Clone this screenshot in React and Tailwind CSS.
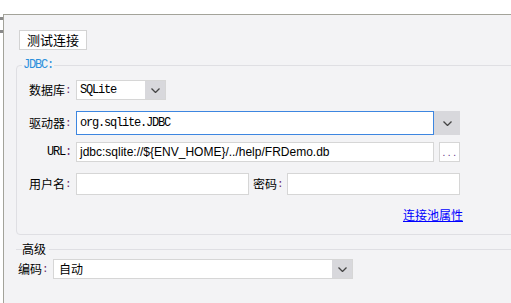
import React from 'react';

const cjk = "font-['Noto_Sans_CJK_SC',sans-serif]";

function Chevron() {
  return (
    <svg width="9" height="5" viewBox="0 0 9 5">
      <path d="M0.5 0.5 L4.5 4.5 L8.5 0.5" stroke="#444" strokeWidth="1.3" fill="none" />
    </svg>
  );
}

function Colon() {
  return <span className="font-['Liberation_Mono',monospace] text-[11px] tracking-[-0.6px] text-[#6b2d6b]">:</span>;
}

function Label({ text }) {
  return (
    <span className={`${cjk} flex w-[54px] shrink-0 items-center justify-end text-[12px] leading-none text-black`}>
      {text}
      <Colon />
    </span>
  );
}

function App() {
  return (
    <div className="flex h-[303px] w-[511px] flex-col overflow-hidden bg-white">
      <div className="h-[14px] shrink-0" />
      <div className="flex flex-1">
        <div className="flex w-[3px] shrink-0 flex-col">
          <div className="mt-[3px] h-[3px] w-[3px] bg-[#8a8a8a]" />
          <div className="mt-[10px] h-[3px] w-[3px] bg-[#8a8a8a]" />
        </div>
        <div className="flex flex-1 flex-col overflow-hidden border-l border-t border-[#a3a39a] bg-[#f3f3f5]">
          <button className={`${cjk} ml-[15px] mt-[15px] flex h-[20px] w-[68px] items-center justify-center border border-[#d3d3d3] bg-white text-[13px] text-black`}>
            测试连接
          </button>

          <fieldset className="ml-[12px] mt-[8px] w-[520px] rounded-[4px] border border-[#dfdfe3] pb-[12px] pt-[8px]">
            <legend className="ml-[5px] px-[1px] font-['Liberation_Mono',monospace] text-[12px] leading-[14px] tracking-[-1.2px] text-[#2a8fdc]">
              JDBC:
            </legend>

            <div className="flex h-[20px] items-stretch">
              <Label text="数据库" />
              <div className="ml-[5px] flex w-[90px] border border-[#d6d6d6] bg-white">
                <span className="flex flex-1 items-center pl-[3px] font-['Liberation_Mono',monospace] text-[12px] tracking-[-1.2px] text-black">SQLite</span>
                <span className="flex w-[20px] items-center justify-center bg-[#d8d8dc]">
                  <Chevron />
                </span>
              </div>
            </div>

            <div className="mt-[11px] flex h-[24px] items-stretch">
              <Label text="驱动器" />
              <div className="ml-[5px] flex w-[358px] items-center border border-[#3d86e0] bg-white pl-[3px] font-['Liberation_Mono',monospace] text-[12px] tracking-[-1.2px] text-black">
                org.sqlite.JDBC
              </div>
              <span className="flex w-[26px] items-center justify-center bg-[#d8d8dc]">
                <Chevron />
              </span>
            </div>

            <div className="mt-[7px] flex h-[20px] items-stretch">
              <span className="flex w-[54px] shrink-0 items-center justify-end font-['Liberation_Mono',monospace] text-[12px] tracking-[-1.2px] text-black">
                URL<span className="text-[#6b2d6b]">:</span>
              </span>
              <div className="ml-[5px] flex w-[358px] items-center border border-[#d6d6d6] bg-white pl-[3px] font-['Liberation_Sans',sans-serif] text-[12px] text-black">
                jdbc:sqlite://${'{'}ENV_HOME{'}'}/../help/FRDemo.db
              </div>
              <button className="ml-[5px] flex w-[21px] items-end justify-center border border-[#d6d6d6] bg-white pb-[3px] pl-[2px] font-['Liberation_Sans',sans-serif] text-[10px] leading-none tracking-[2.5px] text-[#5b2d82]">
                ...
              </button>
            </div>

            <div className="mt-[11px] flex h-[22px] items-stretch">
              <Label text="用户名" />
              <div className="ml-[5px] w-[173px] border border-[#d6d6d6] bg-white" />
              <span className={`${cjk} ml-[4px] flex items-center text-[12px] leading-none text-black`}>
                密码<Colon />
              </span>
              <div className="ml-[4px] w-[173px] border border-[#d6d6d6] bg-white" />
            </div>

            <div className="mt-[13px] flex h-[14px] w-[446px] justify-end">
              <a href="#" className={`${cjk} text-[12px] leading-[14px] text-[#0000ff] underline`}>
                连接池属性
              </a>
            </div>
          </fieldset>

          <div className="ml-[12px] mt-[7px] flex h-[14px] items-center">
            <div className="h-px w-[6px] bg-[#dfdfe3]" />
            <span className={`${cjk} text-[12px] leading-none text-black`}>高级</span>
            <div className="ml-[3px] h-px flex-1 bg-[#dfdfe3]" />
          </div>

          <div className="ml-[14px] mt-[3px] flex h-[20px] items-stretch">
            <span className={`${cjk} flex items-center text-[12px] leading-none text-black`}>
              编码<Colon />
            </span>
            <div className="ml-[5px] flex w-[300px] border border-[#d6d6d6] bg-white">
              <span className={`${cjk} flex flex-1 items-center pl-[5px] text-[12px] text-black`}>自动</span>
              <span className="flex w-[20px] items-center justify-center bg-[#d8d8dc]">
                <Chevron />
              </span>
            </div>
          </div>
        </div>
      </div>
    </div>
  );
}

export default App;
